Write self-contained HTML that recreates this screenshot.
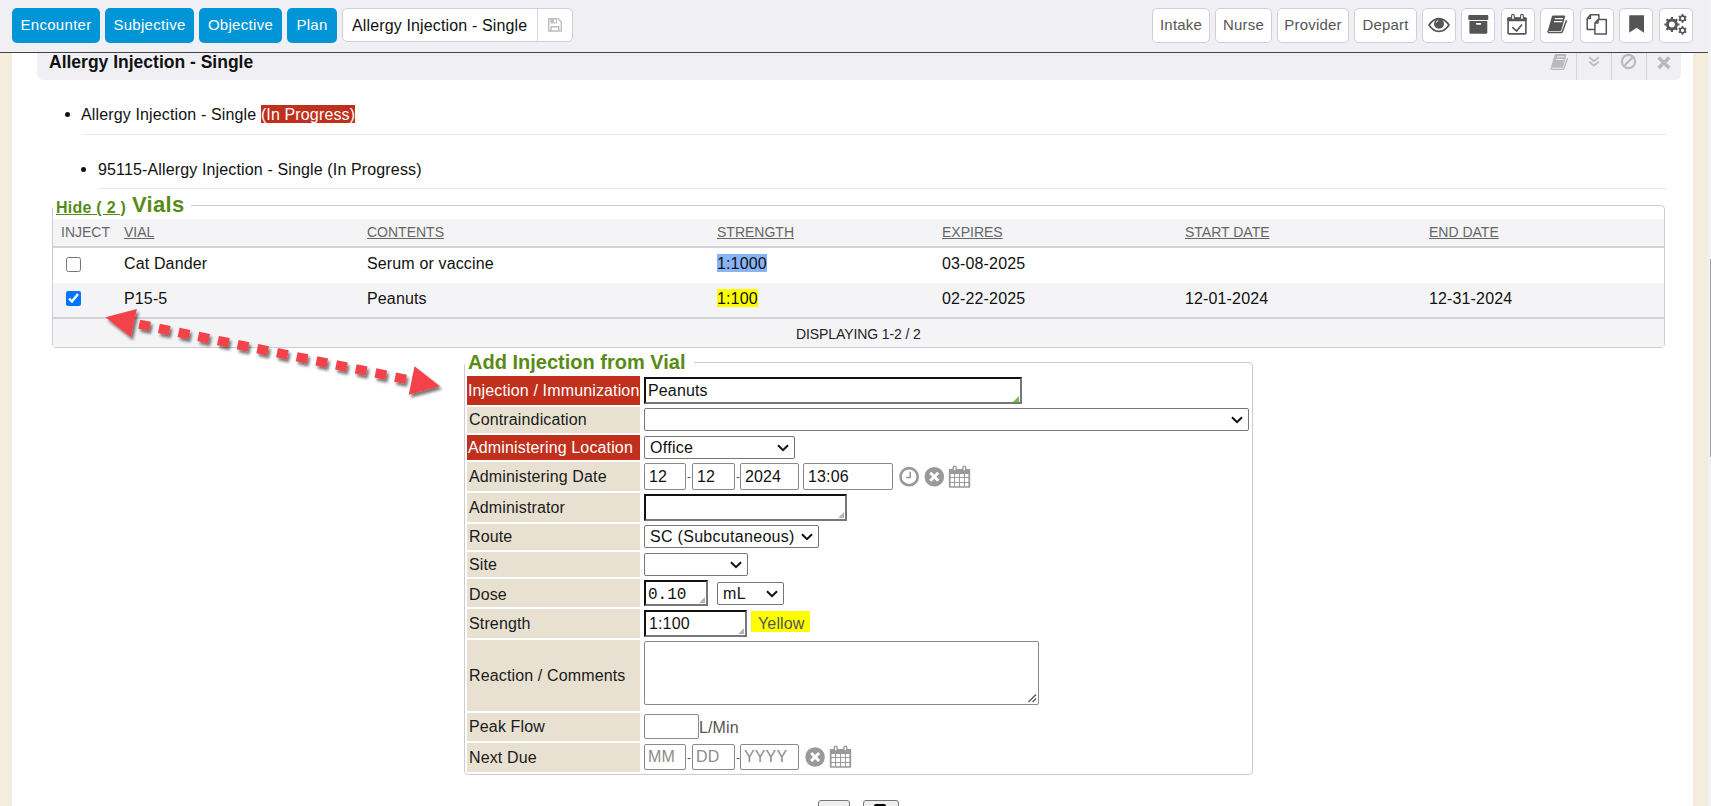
<!DOCTYPE html>
<html><head><meta charset="utf-8">
<style>
*{box-sizing:border-box}
html,body{margin:0;padding:0}
body{width:1711px;height:806px;overflow:hidden;position:relative;background:#fff;font-family:"Liberation Sans",sans-serif;color:#111;letter-spacing:0.14px}
.a{position:absolute}
.t{position:absolute;white-space:nowrap;line-height:1}
.bb{position:absolute;top:8px;height:35px;letter-spacing:0.3px;background:#0095d6;border-radius:5px;color:#fff;font-size:15px;line-height:33px;text-align:center}
.wb{position:absolute;top:8px;height:35px;letter-spacing:0.2px;background:#fff;border:1px solid #cfcfd3;border-radius:5px;color:#555;font-size:15px;line-height:31px;text-align:center}
.wb svg{position:absolute;left:50%;top:50%;transform:translate(-50%,-50%)}
.hdr{position:absolute;font-size:14px;letter-spacing:0;color:#666;line-height:1}
.hdr u{text-decoration:underline}
.cell{position:absolute;font-size:16px;line-height:1;color:#111;white-space:nowrap}
.lab{position:absolute;left:467px;width:173px;background:#e8e1d1;font-size:16px;color:#1a1a1a;white-space:nowrap;padding-left:2px;overflow:hidden}
.lab.r{background:#c0301d;color:#fff;padding-left:1px}
.inp{position:absolute;background:#fff;border:1px solid #8a8a8a;border-radius:2px;font-size:16px;white-space:nowrap}
.ins{position:absolute;background:#fff;border-style:solid;border-width:2px;border-color:#111 #777 #777 #111;font-size:16px;white-space:nowrap}
.grip{position:absolute;right:1px;bottom:1px;width:0;height:0;border-style:solid;border-width:0 0 6px 6px;border-color:transparent transparent #b4b4b4 transparent}
.sel{position:absolute;background:#fff;border:1px solid #767676;border-radius:2px;font-size:16px;letter-spacing:0.3px;white-space:nowrap}
.sel svg{position:absolute;right:5px;top:50%;margin-top:-4px}
</style></head><body>

<!-- side stripes -->
<div class="a" style="left:0;top:53px;width:12px;height:753px;background:#f4ecdd"></div>
<div class="a" style="left:1693px;top:53px;width:15px;height:753px;background:#f4ecdd"></div>
<div class="a" style="left:1708px;top:0;width:3px;height:806px;background:#f1f1f1"></div>
<div class="a" style="left:1710px;top:259px;width:1px;height:198px;background:#a3a3a3"></div>

<!-- top bar -->
<div class="a" style="left:0;top:0;width:1708px;height:53px;background:#efeff4;border-bottom:1px solid #444"></div>
<div class="bb" style="left:12px;width:88px">Encounter</div>
<div class="bb" style="left:105px;width:89px">Subjective</div>
<div class="bb" style="left:199px;width:83px">Objective</div>
<div class="bb" style="left:287px;width:50px">Plan</div>

<div class="a" style="left:342px;top:8px;width:231px;height:34px;background:#fff;border:1px solid #cfcfd3;border-radius:5px"></div>
<div class="a" style="left:537px;top:9px;width:1px;height:32px;background:#d8d8dc"></div>
<div class="t" style="left:352px;top:18px;font-size:16px;color:#111">Allergy Injection - Single</div>

<div class="wb" style="left:1152px;width:58px">Intake</div>
<div class="wb" style="left:1215px;width:57px">Nurse</div>
<div class="wb" style="left:1277px;width:72px">Provider</div>
<div class="wb" style="left:1354px;width:63px">Depart</div>
<div class="wb" style="left:1422px;width:34px"></div>
<div class="wb" style="left:1461px;width:34px"></div>
<div class="wb" style="left:1501px;width:34px"></div>
<div class="wb" style="left:1540px;width:34px"></div>
<div class="wb" style="left:1580px;width:34px"></div>
<div class="wb" style="left:1619px;width:34px"></div>
<div class="wb" style="left:1659px;width:34px"></div>

<!-- header panel -->
<div class="a" style="left:37px;top:53px;width:1644px;height:27px;background:#f0f0f4;border-radius:0 0 6px 6px"></div>
<div class="t" style="left:49px;top:54px;font-size:17.5px;font-weight:bold;color:#111;letter-spacing:0">Allergy Injection - Single</div>
<div class="a" style="left:1576px;top:53px;width:1px;height:27px;background:#d6d6da"></div>
<div class="a" style="left:1611px;top:53px;width:1px;height:27px;background:#d6d6da"></div>
<div class="a" style="left:1646px;top:53px;width:1px;height:27px;background:#d6d6da"></div>

<!-- list -->
<div class="a" style="left:65px;top:112px;width:5px;height:5px;border-radius:50%;background:#111"></div>
<div class="t" style="left:81px;top:107px;font-size:16px">Allergy Injection - Single <span style="background:#c0301d;color:#fff;padding-top:1px">(In Progress)</span></div>
<div class="a" style="left:82px;top:134px;width:1585px;height:1px;background:#eaeaee"></div>
<div class="a" style="left:81px;top:167px;width:5px;height:5px;border-radius:50%;background:#111"></div>
<div class="t" style="left:98px;top:162px;font-size:16px">95115-Allergy Injection - Single (In Progress)</div>
<div class="a" style="left:98px;top:188px;width:1569px;height:1px;background:#eaeaee"></div>


<!-- vials fieldset -->
<div class="a" style="left:52px;top:205px;width:1613px;height:143px;border:1px solid #cdcdd1;border-radius:4px"></div>
<div class="a" style="left:53px;top:198px;width:138px;height:14px;background:#fff"></div>
<div class="t" style="left:56px;top:200px;font-size:16px;font-weight:bold;color:#588b15;text-decoration:underline;letter-spacing:0.25px">Hide ( 2 )</div>
<div class="t" style="left:132px;top:194px;font-size:22px;font-weight:bold;color:#588b15;letter-spacing:0.3px">Vials</div>
<div class="a" style="left:53px;top:219px;width:1611px;height:27px;background:#f4f4f6"></div>
<div class="a" style="left:53px;top:246px;width:1611px;height:2px;background:#d3d3d7"></div>
<div class="a" style="left:53px;top:283px;width:1611px;height:34px;background:#f4f4f6"></div>
<div class="a" style="left:53px;top:317px;width:1611px;height:2px;background:#d3d3d7"></div>
<div class="a" style="left:53px;top:319px;width:1611px;height:28px;background:#f4f4f6"></div>
<div class="hdr" style="left:61px;top:225px">INJECT</div>
<div class="hdr" style="left:124px;top:225px"><u>VIAL</u></div>
<div class="hdr" style="left:367px;top:225px"><u>CONTENTS</u></div>
<div class="hdr" style="left:717px;top:225px"><u>STRENGTH</u></div>
<div class="hdr" style="left:942px;top:225px"><u>EXPIRES</u></div>
<div class="hdr" style="left:1185px;top:225px"><u>START DATE</u></div>
<div class="hdr" style="left:1429px;top:225px"><u>END DATE</u></div>
<input type="checkbox" class="a" style="left:66px;top:257px;margin:0;width:15px;height:15px">
<input type="checkbox" checked class="a" style="left:66px;top:291px;margin:0;width:15px;height:15px">
<div class="cell" style="left:124px;top:256px">Cat Dander</div>
<div class="cell" style="left:367px;top:256px">Serum or vaccine</div>
<div class="a" style="left:717px;top:254px;width:50px;height:18px;background:#8ab4f8"></div>
<div class="cell" style="left:717px;top:256px">1:1000</div>
<div class="cell" style="left:942px;top:256px">03-08-2025</div>
<div class="cell" style="left:124px;top:291px">P15-5</div>
<div class="cell" style="left:367px;top:291px">Peanuts</div>
<div class="a" style="left:717px;top:289px;width:41px;height:18px;background:#ffff00"></div>
<div class="cell" style="left:717px;top:291px">1:100</div>
<div class="cell" style="left:942px;top:291px">02-22-2025</div>
<div class="cell" style="left:1185px;top:291px">12-01-2024</div>
<div class="cell" style="left:1429px;top:291px">12-31-2024</div>
<div class="t" style="left:796px;top:327px;font-size:14px;color:#222;letter-spacing:-0.1px">DISPLAYING 1-2 / 2</div>

<!-- add injection fieldset -->
<div class="a" style="left:464px;top:362px;width:789px;height:413px;border:1px solid #cdcdd1;border-radius:4px"></div>
<div class="a" style="left:465px;top:350px;width:229px;height:20px;background:#fff"></div>
<div class="t" style="left:468px;top:352px;font-size:20px;font-weight:bold;color:#588b15;letter-spacing:0">Add Injection from Vial</div>

<div class="lab r" style="top:376px;height:29px;line-height:29px">Injection / Immunization</div>
<div class="lab" style="top:407px;height:26px;line-height:26px">Contraindication</div>
<div class="lab r" style="top:435px;height:25px;line-height:25px">Administering Location</div>
<div class="lab" style="top:462px;height:29px;line-height:29px">Administering Date</div>
<div class="lab" style="top:493px;height:29px;line-height:29px">Administrator</div>
<div class="lab" style="top:524px;height:26px;line-height:26px">Route</div>
<div class="lab" style="top:552px;height:25px;line-height:25px">Site</div>
<div class="lab" style="top:579px;height:28px;line-height:28px;padding-top:2px">Dose</div>
<div class="lab" style="top:609px;height:29px;line-height:29px">Strength</div>
<div class="lab" style="top:640px;height:71px;line-height:71px">Reaction / Comments</div>
<div class="lab" style="top:713px;height:28px;line-height:28px">Peak Flow</div>
<div class="lab" style="top:743px;height:29px;line-height:29px">Next Due</div>

<div class="ins" style="left:644px;top:377px;width:378px;height:27px;line-height:23px;padding-left:2px">Peanuts<div class="grip" style="border-bottom-color:#72bd3c;bottom:0"></div></div>
<div class="sel" style="left:644px;top:408px;width:605px;height:23px"><svg width="12" height="8" viewBox="0 0 12 8"><path d="M1 1.2L6 6.2L11 1.2" fill="none" stroke="#111" stroke-width="2"/></svg></div>
<div class="sel" style="left:644px;top:436px;width:151px;height:23px;line-height:21px;padding-left:5px">Office<svg width="12" height="8" viewBox="0 0 12 8"><path d="M1 1.2L6 6.2L11 1.2" fill="none" stroke="#111" stroke-width="2"/></svg></div>

<div class="inp" style="left:644px;top:463px;width:42px;height:27px;line-height:25px;padding-left:4px">12</div>
<div class="t" style="left:687px;top:471px;font-size:12px;color:#555">-</div>
<div class="inp" style="left:692px;top:463px;width:43px;height:27px;line-height:25px;padding-left:4px">12</div>
<div class="t" style="left:736px;top:471px;font-size:12px;color:#555">-</div>
<div class="inp" style="left:740px;top:463px;width:59px;height:27px;line-height:25px;padding-left:4px">2024</div>
<div class="inp" style="left:803px;top:463px;width:90px;height:27px;line-height:25px;padding-left:4px">13:06</div>

<div class="ins" style="left:644px;top:494px;width:203px;height:27px"><div class="grip"></div></div>
<div class="sel" style="left:644px;top:525px;width:175px;height:23px;line-height:21px;padding-left:5px">SC (Subcutaneous)<svg width="12" height="8" viewBox="0 0 12 8"><path d="M1 1.2L6 6.2L11 1.2" fill="none" stroke="#111" stroke-width="2"/></svg></div>
<div class="sel" style="left:644px;top:553px;width:104px;height:23px"><svg width="12" height="8" viewBox="0 0 12 8"><path d="M1 1.2L6 6.2L11 1.2" fill="none" stroke="#111" stroke-width="2"/></svg></div>

<div class="ins" style="left:644px;top:580px;width:64px;height:26px;line-height:26px;padding-left:2px;font-family:'Liberation Mono',monospace;font-size:16px;letter-spacing:0;color:#111">0.10<div class="grip"></div></div>
<div class="sel" style="left:717px;top:582px;width:67px;height:23px;line-height:21px;padding-left:5px">mL<svg width="12" height="8" viewBox="0 0 12 8"><path d="M1 1.2L6 6.2L11 1.2" fill="none" stroke="#111" stroke-width="2"/></svg></div>

<div class="ins" style="left:644px;top:610px;width:103px;height:27px;line-height:23px;padding-left:3px">1:100<div class="grip"></div></div>
<div class="a" style="left:751px;top:611px;width:59px;height:21px;background:#ffff00"></div><div class="t" style="left:758px;top:616px;font-size:16px;color:#555">Yellow</div>

<div class="inp" style="left:644px;top:641px;width:395px;height:64px"><svg class="a" style="right:1px;bottom:1px" width="10" height="10" viewBox="0 0 10 10"><path d="M1.5 9L9 1.5M5.5 9L9 5.5" stroke="#555" stroke-width="1.3"/></svg></div>
<div class="inp" style="left:644px;top:714px;width:55px;height:25px"></div>
<div class="t" style="left:699px;top:720px;font-size:16px;color:#555">L/Min</div>

<div class="inp" style="left:644px;top:744px;width:42px;height:26px;line-height:24px;padding-left:3px;color:#8c8c8c">MM</div>
<div class="t" style="left:687px;top:752px;font-size:12px;color:#555">-</div>
<div class="inp" style="left:692px;top:744px;width:43px;height:26px;line-height:24px;padding-left:3px;color:#8c8c8c">DD</div>
<div class="t" style="left:736px;top:752px;font-size:12px;color:#555">-</div>
<div class="inp" style="left:740px;top:744px;width:59px;height:26px;line-height:24px;padding-left:3px;color:#8c8c8c">YYYY</div>

<!-- bottom buttons -->
<div class="a" style="left:818px;top:800px;width:32px;height:20px;background:#efefef;border:1px solid #767676;border-radius:3px"></div>
<div class="a" style="left:863px;top:800px;width:36px;height:20px;background:#efefef;border:1px solid #767676;border-radius:3px"></div>
<div class="a" style="left:874px;top:804px;width:12px;height:4px;background:#000;border-radius:2px 2px 0 0"></div>


<svg class="a" style="left:0;top:0" width="1711" height="806" viewBox="0 0 1711 806">
<defs><filter id="sh" x="-10%" y="-30%" width="120%" height="160%"><feGaussianBlur in="SourceAlpha" stdDeviation="1.6"/><feOffset dx="1.5" dy="2.5"/><feComponentTransfer><feFuncA type="linear" slope="0.55"/></feComponentTransfer><feMerge><feMergeNode/><feMergeNode in="SourceGraphic"/></feMerge></filter></defs>
<g fill="#555" stroke="none">
 <!-- eye -->
 <path d="M1429 25C1432.5 19.6 1436 18.6 1439 18.6C1442 18.6 1445.5 19.6 1449 25C1445.5 30.4 1442 31.4 1439 31.4C1436 31.4 1432.5 30.4 1429 25Z" fill="none" stroke="#555" stroke-width="1.7"/>
 <circle cx="1439" cy="23.8" r="5"/>
 <path d="M1436.2 22.6A3 3 0 0 1 1438.3 20.4" fill="none" stroke="#fff" stroke-width="1"/>
 <!-- archive -->
 <rect x="1468.3" y="15" width="20" height="5" rx="1"/>
 <path d="M1469.4 21H1487.3V32.2A1.5 1.5 0 0 1 1485.8 33.7H1470.9A1.5 1.5 0 0 1 1469.4 32.2Z"/>
 <rect x="1476" y="23" width="5.2" height="1.7" rx="0.8" fill="#fff"/>
 <!-- calendar check -->
 <rect x="1508.1" y="18.2" width="17.8" height="15.7" rx="1" fill="none" stroke="#555" stroke-width="1.6"/>
 <rect x="1507.3" y="17.3" width="19.4" height="4" rx="1"/>
 <rect x="1511.6" y="14.4" width="2.7" height="5.4" rx="1.35" fill="#fff" stroke="#555" stroke-width="1.1"/>
 <rect x="1520.6" y="14.4" width="2.7" height="5.4" rx="1.35" fill="#fff" stroke="#555" stroke-width="1.1"/>
 <path d="M1512.3 27.2L1516.6 31L1522 24.4" fill="none" stroke="#555" stroke-width="1.6"/>
 <!-- book -->
 <path d="M1553.4 15.6H1564.2Q1565.4 15.6 1565.1 16.8L1561.4 30.1Q1561.2 30.9 1560.3 30.9H1548.6Q1547.8 30.9 1548 30.1L1551.9 16.6Q1552.2 15.6 1553.4 15.6Z"/>
 <path d="M1548.3 30.6Q1547.6 32.6 1549.4 32.6H1560.8Q1562 32.6 1562.4 31.4L1566.5 20.2" fill="none" stroke="#555" stroke-width="1.5"/>
 <path d="M1554.8 18.6H1563M1554 21.7H1562.2" stroke="#fff" stroke-width="1.2"/>
 <!-- copy -->
 <path d="M1590.4 14.8H1598.9V29.6H1587.2V18.4Z M1590.4 14.8V18.4H1587.2" fill="#fff" stroke="#555" stroke-width="1.5" stroke-linejoin="round"/>
 <path d="M1598 19.4H1606.3V34H1594.9V22.9Z M1598 19.4V22.9H1594.9" fill="#fff" stroke="#555" stroke-width="1.5" stroke-linejoin="round"/>
 <!-- bookmark -->
 <path d="M1629.8 15.2H1643.4Q1644 15.2 1644 15.8V32.8L1636.6 27.8L1629.2 32.8V15.8Q1629.2 15.2 1629.8 15.2Z"/>
 <!-- gears -->
 <path fill-rule="evenodd" d="M1677.35 22.24 L1677.69 23.39 L1679.43 23.44 L1679.43 25.56 L1677.69 25.61 L1677.35 26.76 L1676.78 27.81 L1677.97 29.07 L1676.47 30.57 L1675.21 29.38 L1674.16 29.95 L1673.01 30.29 L1672.96 32.03 L1670.84 32.03 L1670.79 30.29 L1669.64 29.95 L1668.59 29.38 L1667.33 30.57 L1665.83 29.07 L1667.02 27.81 L1666.45 26.76 L1666.11 25.61 L1664.37 25.56 L1664.37 23.44 L1666.11 23.39 L1666.45 22.24 L1667.02 21.19 L1665.83 19.93 L1667.33 18.43 L1668.59 19.62 L1669.64 19.05 L1670.79 18.71 L1670.84 16.97 L1672.96 16.97 L1673.01 18.71 L1674.16 19.05 L1675.21 19.62 L1676.47 18.43 L1677.97 19.93 L1676.78 21.19ZM1674.90 24.50A3.0 3.0 0 1 0 1668.90 24.50A3.0 3.0 0 1 0 1674.90 24.50Z"/>
 <path fill-rule="evenodd" d="M1685.80 18.40 L1685.70 19.22 L1686.67 19.80 L1685.80 21.31 L1684.81 20.75 L1684.15 21.26 L1683.38 21.58 L1683.38 22.71 L1681.62 22.71 L1681.62 21.58 L1680.85 21.26 L1680.19 20.75 L1679.20 21.31 L1678.33 19.80 L1679.30 19.22 L1679.20 18.40 L1679.30 17.58 L1678.33 17.00 L1679.20 15.49 L1680.19 16.05 L1680.85 15.54 L1681.62 15.22 L1681.62 14.09 L1683.38 14.09 L1683.38 15.22 L1684.15 15.54 L1684.81 16.05 L1685.80 15.49 L1686.67 17.00 L1685.70 17.58ZM1684.10 18.40A1.6 1.6 0 1 0 1680.90 18.40A1.6 1.6 0 1 0 1684.10 18.40Z"/>
 <path fill-rule="evenodd" d="M1685.80 30.40 L1685.70 31.22 L1686.67 31.80 L1685.80 33.31 L1684.81 32.75 L1684.15 33.26 L1683.38 33.58 L1683.38 34.71 L1681.62 34.71 L1681.62 33.58 L1680.85 33.26 L1680.19 32.75 L1679.20 33.31 L1678.33 31.80 L1679.30 31.22 L1679.20 30.40 L1679.30 29.58 L1678.33 29.00 L1679.20 27.49 L1680.19 28.05 L1680.85 27.54 L1681.62 27.22 L1681.62 26.09 L1683.38 26.09 L1683.38 27.22 L1684.15 27.54 L1684.81 28.05 L1685.80 27.49 L1686.67 29.00 L1685.70 29.58ZM1684.10 30.40A1.6 1.6 0 1 0 1680.90 30.40A1.6 1.6 0 1 0 1684.10 30.40Z"/>
</g>
<!-- save icon in title input -->
<g fill="#bcbcc4">
 <path d="M548.7 18.7H558L561.3 22V31H548.7Z" fill="none" stroke="#bdbdc2" stroke-width="1.4" stroke-linejoin="round"/><path fill-rule="evenodd" d="M550.3 19.2H557V23.6H550.3Z M553.9 19.8H556.1V22.6H553.9Z"/><path d="M551.1 31V26.8H558.7V31" fill="none" stroke="#bdbdc2" stroke-width="1.5"/>
</g>
<!-- header panel icons -->
<g fill="#b9b9be" stroke="none">
 <g transform="translate(1551 54) scale(0.9) translate(-1548 -15.5)">
  <path d="M1553.4 15.6H1564.2Q1565.4 15.6 1565.1 16.8L1561.4 30.1Q1561.2 30.9 1560.3 30.9H1548.6Q1547.8 30.9 1548 30.1L1551.9 16.6Q1552.2 15.6 1553.4 15.6Z"/>
  <path d="M1548.3 30.6Q1547.6 32.6 1549.4 32.6H1560.8Q1562 32.6 1562.4 31.4L1566.5 20.2" fill="none" stroke="#b9b9be" stroke-width="1.5"/>
  <path d="M1554.8 18.6H1563M1554 21.7H1562.2" stroke="#f0f0f4" stroke-width="1.2"/>
 </g>
 <path d="M1589.2 57.2L1594 61.2L1598.8 57.2M1589.2 61.6L1594 65.6L1598.8 61.6" fill="none" stroke="#b9b9be" stroke-width="1.6"/>
 <circle cx="1628.5" cy="61.5" r="6.6" fill="none" stroke="#b9b9be" stroke-width="2.2"/>
 <path d="M1633 57L1624 66" stroke="#b9b9be" stroke-width="2.2"/>
 <path d="M1658.6 57.4L1669.2 68M1669.2 57.4L1658.6 68" stroke="#b9b9be" stroke-width="3.6"/>
</g>
<!-- date icons -->
<g fill="#999">
 <circle cx="909.1" cy="476.7" r="8.6" fill="none" stroke="#999" stroke-width="2.6"/>
 <path d="M910.2 471.8V477.6H906" fill="none" stroke="#999" stroke-width="1.5"/>
 <circle cx="934.3" cy="476.7" r="9.8"/>
 <path d="M930.3 472.7L938.3 480.7M938.3 472.7L930.3 480.7" stroke="#fff" stroke-width="3"/>
 <g id="cal">
  <path fill-rule="evenodd" d="M949.6 469H969.4Q970.2 469 970.2 469.8V486.9Q970.2 487.7 969.4 487.7H949.6Q948.8 487.7 948.8 486.9V469.8Q948.8 469 949.6 469Z M950.6 473.9H954.1V477H950.6Z M955.1 473.9H959V477H955.1Z M960 473.9H963.9V477H960Z M964.9 473.9H968.4V477H964.9Z M950.6 478.1H954.1V481.9H950.6Z M955.1 478.1H959V481.9H955.1Z M960 478.1H963.9V481.9H960Z M964.9 478.1H968.4V481.9H964.9Z M950.6 483H954.1V486.3H950.6Z M955.1 483H959V486.3H955.1Z M960 483H963.9V486.3H960Z M964.9 483H968.4V486.3H964.9Z"/>
  <rect x="952.6" y="465.4" width="4.2" height="6" rx="2.1"/>
  <rect x="962.2" y="465.4" width="4.2" height="6" rx="2.1"/>
  <rect x="954" y="466.8" width="1.4" height="3.6" rx="0.7" fill="#fff"/>
  <rect x="963.6" y="466.8" width="1.4" height="3.6" rx="0.7" fill="#fff"/>
 </g>
 <circle cx="815.1" cy="757" r="9.8"/>
 <path d="M811.1 753L819.1 761M819.1 753L811.1 761" stroke="#fff" stroke-width="3"/>
 <use href="#cal" transform="translate(-119 280)"/>
</g>
<!-- arrow -->
<g filter="url(#sh)"><path d="M105.50 317.30 L136.83 308.96 L130.97 337.36ZM440.00 386.30 L414.53 366.24 L408.67 394.64ZM140.14 319.65 L150.91 321.87 L149.01 331.08 L138.24 328.85ZM159.83 323.71 L170.60 325.93 L168.70 335.14 L157.93 332.91ZM179.51 327.77 L190.28 329.99 L188.39 339.20 L177.61 336.97ZM199.20 331.83 L209.97 334.05 L208.07 343.26 L197.30 341.03ZM218.88 335.89 L229.66 338.11 L227.76 347.32 L216.98 345.10ZM238.57 339.95 L249.34 342.17 L247.44 351.38 L236.67 349.16ZM258.25 344.01 L269.03 346.23 L267.13 355.44 L256.35 353.22ZM277.94 348.07 L288.71 350.29 L286.81 359.50 L276.04 357.28ZM297.62 352.13 L308.40 354.35 L306.50 363.56 L295.73 361.34ZM317.31 356.19 L328.08 358.42 L326.18 367.62 L315.41 365.40ZM337.00 360.25 L347.77 362.48 L345.87 371.68 L335.10 369.46ZM356.68 364.31 L367.45 366.54 L365.56 375.74 L354.78 373.52ZM376.37 368.37 L387.14 370.60 L385.24 379.80 L374.47 377.58ZM396.05 372.44 L406.83 374.66 L404.93 383.86 L394.15 381.64Z" fill="#f3434a"/></g>
</svg>

</body></html>
